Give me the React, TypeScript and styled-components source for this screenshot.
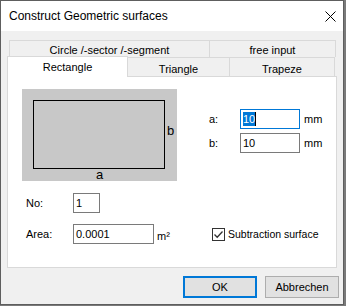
import React from 'react';
import styled, { createGlobalStyle } from 'styled-components';

const GlobalStyle = createGlobalStyle`
  html, body {
    margin: 0;
    background: #7a7a7a;
  }
  body {
    font-family: "Liberation Sans", Arial, sans-serif;
    color: #000;
  }
`;

const Window = styled.div`
  width: 344px;
  height: 305px;
  box-sizing: border-box;
  border: 1px solid #5e5e5e;
  background: #f0f0f0;
  display: flex;
  flex-direction: column;
`;

const TitleBar = styled.div`
  height: 30px;
  flex: none;
  background: #fff;
  display: flex;
  align-items: center;
  justify-content: space-between;
  padding: 0 7px 0 8px;
  font-size: 12px;
`;

const Body = styled.div`
  flex: 1;
  display: flex;
  flex-direction: column;
  padding: 9px 4px 6px 6px;
`;

const TabRow = styled.div<{ $h: number }>`
  display: flex;
  align-items: flex-end;
  height: ${(p) => p.$h}px;
  padding-left: 2px;
`;

const Tab = styled.div<{ $w: number; $selected?: boolean; $drop?: number }>`
  box-sizing: border-box;
  width: ${(p) => p.$w}px;
  height: 100%;
  border: 1px solid #d9d9d9;
  border-bottom: none;
  background: ${(p) => (p.$selected ? '#fff' : '#f0f0f0')};
  font-size: 11px;
  display: flex;
  justify-content: center;
  align-items: center;
  padding-top: ${(p) => p.$drop ?? 0}px;

  & + & {
    margin-left: -1px;
  }

  ${(p) =>
    p.$selected &&
    `
    position: relative;
    z-index: 1;
    height: 21px;
    margin-left: -2px;
    margin-bottom: -1px;
  `}

  & + &[data-after-selected] {
    margin-left: 0;
  }
`;

const Panel = styled.div`
  width: 330px;
  height: 192px;
  box-sizing: border-box;
  border: 1px solid #d9d9d9;
  background: #fff;
  padding: 12px 0 0 14px;
`;

const TopSection = styled.div`
  display: flex;
  align-items: flex-start;
`;

const SizeGrid = styled.div`
  display: grid;
  grid-template-columns: 27px 60px auto;
  grid-auto-rows: 20px;
  column-gap: 4px;
  row-gap: 4px;
  align-items: center;
  margin: 20px 0 0 32px;
  font-size: 11px;
`;

const Label = styled.span`
  font-size: 11px;
`;

const TextBox = styled.div<{ $w?: number; $focused?: boolean }>`
  box-sizing: border-box;
  width: ${(p) => (p.$w ? `${p.$w}px` : '100%')};
  height: 20px;
  border: 1px solid ${(p) => (p.$focused ? '#0078d7' : '#7a7a7a')};
  background: #fff;
  font-size: 11px;
  display: flex;
  align-items: center;
  padding-left: 2px;
`;

const Selection = styled.span`
  background: #0078d7;
  color: #fff;
  line-height: 14px;
`;

const Caret = styled.span`
  width: 1px;
  height: 14px;
  background: #000;
`;

const BottomGrid = styled.div`
  display: grid;
  grid-template-columns: 47px 81px 58px auto;
  grid-auto-rows: 20px;
  row-gap: 11px;
  align-items: center;
  margin: 12px 0 0 4px;
`;

const Unit = styled.span`
  font-size: 11px;
  padding-left: 3px;
  align-self: end;
  padding-bottom: 2px;
`;

const CheckLabel = styled.label`
  display: flex;
  align-items: center;
  gap: 3px;
  font-size: 10.5px;
`;

const CheckBox = styled.span`
  box-sizing: border-box;
  width: 13px;
  height: 13px;
  border: 1px solid #333;
  background: #fff;
  display: flex;
  align-items: center;
  justify-content: center;
`;

const ButtonRow = styled.div`
  display: flex;
  justify-content: flex-end;
  gap: 8px;
  margin-top: 8px;
`;

const Button = styled.button<{ $primary?: boolean }>`
  box-sizing: border-box;
  width: 74px;
  height: 22px;
  padding: 0;
  background: #e1e1e1;
  border: ${(p) => (p.$primary ? '2px solid #0078d7' : '1px solid #adadad')};
  font-family: inherit;
  font-size: 11px;
  color: #000;
`;

const Picture = () => (
  <svg width="155" height="92" viewBox="0 0 155 92">
    <rect x="0" y="0" width="155" height="92" fill="#c8c8c8" />
    <rect x="11.5" y="11.5" width="131" height="68" fill="none" stroke="#000" strokeWidth="1" />
    <text x="145" y="46" fontSize="13" fontFamily="Liberation Sans, Arial, sans-serif" fill="#000">
      b
    </text>
    <text x="74" y="90" fontSize="13" fontFamily="Liberation Sans, Arial, sans-serif" fill="#000">
      a
    </text>
  </svg>
);

export default function App() {
  return (
    <>
      <GlobalStyle />
      <Window>
        <TitleBar>
          <span>Construct Geometric surfaces</span>
          <svg width="11" height="11" viewBox="0 0 11 11">
            <path d="M0.5 0.5 L10.5 10.5 M10.5 0.5 L0.5 10.5" stroke="#000" strokeWidth="1" />
          </svg>
        </TitleBar>
        <Body>
          <TabRow $h={17}>
            <Tab $w={201} $drop={2}>Circle /-sector /-segment</Tab>
            <Tab $w={127} $drop={2}>free input</Tab>
          </TabRow>
          <TabRow $h={19}>
            <Tab $w={121} $selected>Rectangle</Tab>
            <Tab $w={103} $drop={3} data-after-selected>
              Triangle
            </Tab>
            <Tab $w={106} $drop={3}>Trapeze</Tab>
          </TabRow>
          <Panel>
            <TopSection>
              <Picture />
              <SizeGrid>
                <Label>a:</Label>
                <TextBox $focused>
                  <Selection>10</Selection>
                  <Caret />
                </TextBox>
                <Label>mm</Label>
                <Label>b:</Label>
                <TextBox>10</TextBox>
                <Label>mm</Label>
              </SizeGrid>
            </TopSection>
            <BottomGrid>
              <Label>No:</Label>
              <TextBox $w={27}>1</TextBox>
              <span />
              <span />
              <Label>Area:</Label>
              <TextBox $w={81}>0.0001</TextBox>
              <Unit>m²</Unit>
              <CheckLabel>
                <CheckBox>
                  <svg width="11" height="11" viewBox="0 0 11 11">
                    <polyline points="1.5,5.5 4.2,8.3 9.5,2.5" fill="none" stroke="#333" strokeWidth="1.3" />
                  </svg>
                </CheckBox>
                Subtraction surface
              </CheckLabel>
            </BottomGrid>
          </Panel>
          <ButtonRow>
            <Button $primary>OK</Button>
            <Button>Abbrechen</Button>
          </ButtonRow>
        </Body>
      </Window>
    </>
  );
}
